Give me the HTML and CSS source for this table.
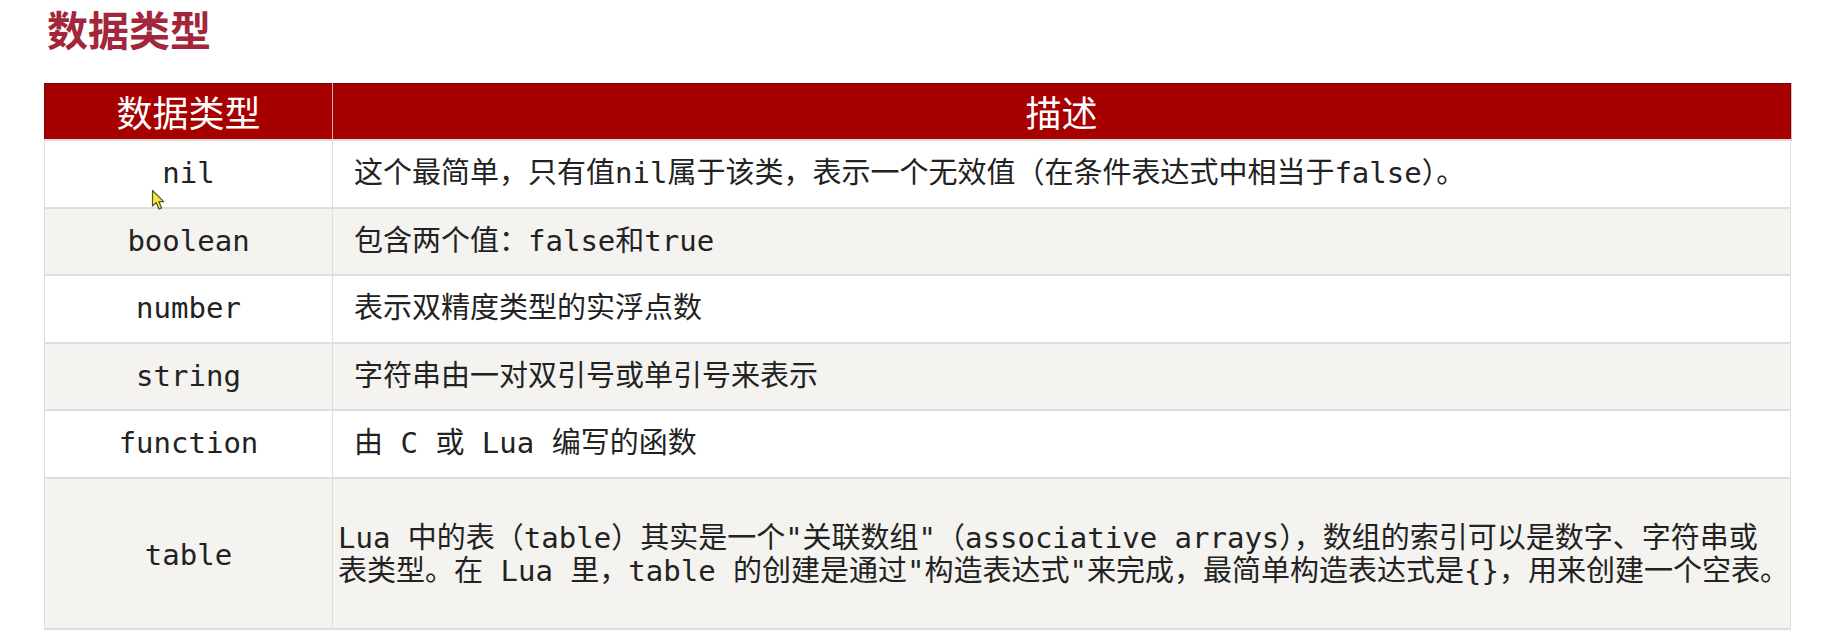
FILE: index.html
```html
<!DOCTYPE html>
<html lang="zh-CN">
<head>
<meta charset="utf-8">
<title>数据类型</title>
<link rel="stylesheet" href="styles.css">
</head>
<body>
<main class="page">
  <h1 class="title">数据类型</h1>
  <table class="types">
    <thead>
      <tr>
        <th class="col-type">数据类型</th>
        <th class="col-desc">描述</th>
      </tr>
    </thead>
    <tbody>
      <tr>
        <td class="type">nil</td>
        <td class="desc">这个最简单，只有值nil属于该类，表示一个无效值（在条件表达式中相当于false）。</td>
      </tr>
      <tr>
        <td class="type">boolean</td>
        <td class="desc">包含两个值：false和true</td>
      </tr>
      <tr>
        <td class="type">number</td>
        <td class="desc">表示双精度类型的实浮点数</td>
      </tr>
      <tr>
        <td class="type">string</td>
        <td class="desc">字符串由一对双引号或单引号来表示</td>
      </tr>
      <tr>
        <td class="type">function</td>
        <td class="desc">由 C 或 Lua 编写的函数</td>
      </tr>
      <tr class="tall">
        <td class="type">table</td>
        <td class="desc desc-tight">Lua 中的表（table）其实是一个"关联数组"（associative arrays），数组的索引可以是数字、字符串或<br>表类型。在 Lua 里，table 的创建是通过"构造表达式"来完成，最简单构造表达式是{}，用来创建一个空表。</td>
      </tr>
    </tbody>
  </table>
  <svg class="cursor" width="16" height="22" viewBox="0 0 16 22" aria-hidden="true">
    <path d="M1.5 1.5 L1.5 17 L5.2 13.6 L8 20 L10.6 18.9 L7.9 12.6 L12.8 12.6 Z" fill="#f2e64a" stroke="#5a5220" stroke-width="1.2" stroke-linejoin="round"/>
  </svg>
</main>
</body>
</html>
```

FILE: styles.css
```css
html, body {
  margin: 0;
  padding: 0;
  background: #ffffff;
}

.page {
  position: relative;
  padding: 0 47px 0 44px;
}

.title {
  margin: 0 0 27px 3px;
  font-family: "Noto Sans CJK SC", sans-serif;
  font-weight: 700;
  font-size: 41px;
  line-height: 56px;
  color: #a2273a;
}

.types {
  width: 100%;
  border-collapse: collapse;
  table-layout: fixed;
  font-family: "DejaVu Sans Mono", "Noto Sans CJK SC", monospace;
  color: #222222;
}

.types thead tr {
  background: #a60000;
  box-shadow: 0 0 0 1px rgba(214, 120, 140, 0.55);
}

.types th {
  height: 55px;
  padding: 0;
  font-family: "Noto Sans CJK SC", sans-serif;
  font-weight: 400;
  font-size: 36px;
  line-height: 55px;
  color: #ffffff;
  text-align: center;
  border: 1px solid #760707;
}

.types th.col-type {
  width: 287px;
  border-right: 1px solid #c9b5b5;
}

.types td {
  height: 65.5px;
  padding: 0;
  font-size: 29px;
  line-height: 33px;
  border: 1px solid #dedede;
  border-top-width: 2px;
  border-bottom-width: 2px;
  vertical-align: middle;
}

.types tbody tr:nth-child(odd) {
  background: #ffffff;
}

.types tbody tr:nth-child(even) {
  background: #f4f3f0;
}

.types td.type {
  text-align: center;
}

.types td.desc {
  padding-left: 21px;
  text-align: left;
}

.types td.desc-tight {
  padding-left: 5px;
}

.types tr.tall td {
  height: 145px;
  padding-top: 4px;
}

.cursor {
  position: absolute;
  left: 151px;
  top: 189px;
}
```
